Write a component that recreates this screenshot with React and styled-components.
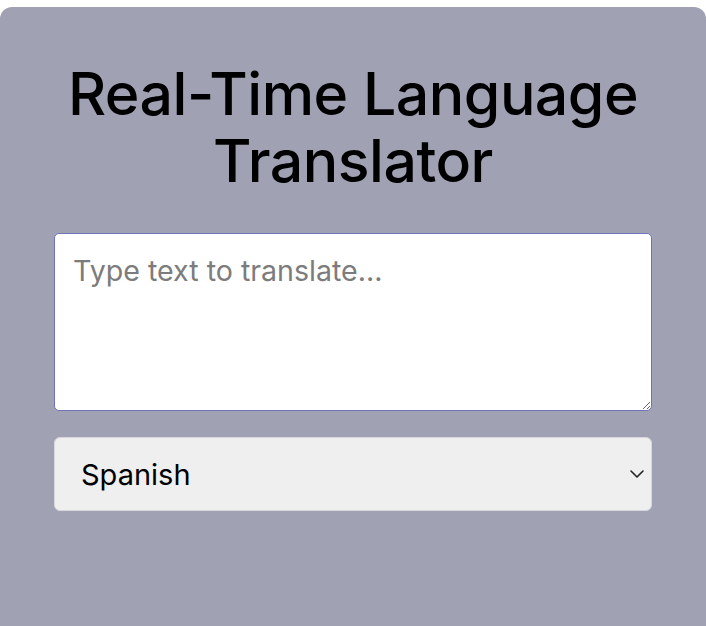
import React, { useState } from 'react';
import styled, { createGlobalStyle } from 'styled-components';

const GlobalStyle = createGlobalStyle`
    html, body {
        margin: 0;
        padding: 0;
        background: #ffffff;
        font-family: Inter, "Noto Sans", sans-serif;
    }
`;

const Page = styled.div`
    padding-top: 7px;
    height: 626px;
    box-sizing: border-box;
    overflow: hidden;
`;

const Card = styled.div`
    background: #a0a1b3;
    border-radius: 12px;
    min-height: 640px;
    padding: 53px 54px 0;
    box-sizing: border-box;
    display: flex;
    flex-direction: column;
`;

const Title = styled.h1`
    margin: 0 0 39px;
    text-align: center;
    font-family: Inter, sans-serif;
    font-weight: 500;
    font-size: 59px;
    line-height: 67px;
    letter-spacing: -0.5px;
    color: #000;
`;

const TextArea = styled.textarea`
    box-sizing: border-box;
    width: 100%;
    height: 178px;
    padding: 19px 18px;
    border: 1px solid #6f74b8;
    border-radius: 5px;
    background: #fff;
    font-family: Inter, sans-serif;
    font-size: 28.6px;
    color: #000;
    caret-color: #000;
    resize: vertical;
    outline: none;

    &::placeholder {
        color: #7c7c7c;
    }
`;

const SelectWrap = styled.div`
    position: relative;
    margin-top: 26px;
`;

const Select = styled.select`
    appearance: none;
    width: 100%;
    height: 74px;
    padding: 0 26px;
    border: 1px solid #d6d6dc;
    border-radius: 6px;
    background: #efefef;
    font-family: Inter, sans-serif;
    font-size: 29px;
    color: #000;
    outline: none;
`;

const Chevron = styled.svg`
    position: absolute;
    right: 7px;
    top: 50%;
    transform: translateY(-50%);
    pointer-events: none;
`;

export default function App() {
    const [text, setText] = useState('');
    const [lang, setLang] = useState('es');

    return (
        <Page>
            <GlobalStyle />
            <Card>
                <Title>Real-Time Language Translator</Title>
                <TextArea
                    autoFocus
                    placeholder="Type text to translate..."
                    value={text}
                    onChange={(e) => setText(e.target.value)}
                />
                <SelectWrap>
                    <Select value={lang} onChange={(e) => setLang(e.target.value)}>
                        <option value="es">Spanish</option>
                        <option value="fr">French</option>
                        <option value="de">German</option>
                    </Select>
                    <Chevron width="16" height="10" viewBox="0 0 16 10" fill="none">
                        <path d="M2 2l6 6 6-6" stroke="#222" strokeWidth="1.6" strokeLinecap="round" strokeLinejoin="round" />
                    </Chevron>
                </SelectWrap>
            </Card>
        </Page>
    );
}
